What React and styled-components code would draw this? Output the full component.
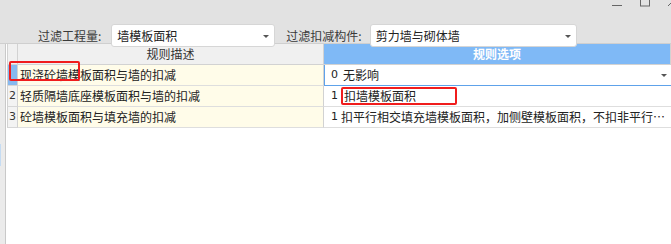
import { Fragment } from "react";
import styled, { createGlobalStyle } from "styled-components";

const Global = createGlobalStyle`
  html, body { margin: 0; padding: 0; background: #fff; }
  body {
    font-family: "Noto Sans CJK SC", "Noto Sans", sans-serif;
    font-size: 12px;
    color: #333;
  }
`;

const Page = styled.div`
  width: 671px;
  height: 244px;
  overflow: hidden;
  position: relative;
  background: #fff;
  display: flex;
  flex-direction: column;
`;

const TitleBar = styled.div`
  height: 14px;
  background: #e2e2e2;
  display: flex;
  justify-content: flex-end;
  align-items: flex-start;
`;

const WinControls = styled.svg`
  display: block;
`;

const FilterBar = styled.div`
  height: 30px;
  background: #e2e2e2;
  display: flex;
  align-items: flex-start;
  padding: 10px 0 0 38px;
  box-sizing: border-box;
  border-bottom: 1px solid #cfcfcf;
  position: relative;
  z-index: 2;
`;

const Label = styled.span`
  line-height: 23px;
  color: #3a3a3a;
  margin-right: ${(p) => p.$gap}px;
  white-space: nowrap;
`;

const Select = styled.div`
  width: ${(p) => p.$w}px;
  height: 23px;
  box-sizing: border-box;
  background: #fff;
  border: 1px solid #d6d6d6;
  border-radius: 3px;
  display: flex;
  align-items: center;
  justify-content: space-between;
  padding: 0 5px;
  margin-right: ${(p) => p.$gap}px;
  color: #222;
`;

const Arrow = styled.span`
  width: 0;
  height: 0;
  border-left: 3px solid transparent;
  border-right: 3px solid transparent;
  border-top: 3px solid #555;
  margin-top: 1px;
`;

const Body = styled.div`
  flex: 1;
  display: flex;
`;

const Gutter = styled.div`
  width: 5px;
  background: #ebebeb;
  border-right: 1px solid #c9c9c9;
  position: relative;
  &::after {
    content: "";
    position: absolute;
    left: 0;
    top: 100px;
    width: 1px;
    height: 22px;
    background: #c5dcf3;
  }
`;

const Grid = styled.div`
  flex: 1;
  display: grid;
  grid-template-columns: 11px 306px 1fr;
  grid-auto-rows: 21px;
  align-content: start;
  background: #fff;
  padding-left: 1px;
`;

const Head = styled.div`
  height: 20px;
  line-height: 20px;
  text-align: center;
  background: ${(p) => (p.$blue ? "#7fb9f6" : "#f0f0f0")};
  color: ${(p) => (p.$blue ? "#fff" : "#333")};
  font-weight: ${(p) => (p.$blue ? 600 : 400)};
  border-right: 1px solid #d2d2d2;
  border-bottom: 1px solid #d2d2d2;
  border-left: ${(p) => (p.$first ? "1px solid #d2d2d2" : "none")};
`;

const Num = styled.div`
  background: ${(p) => (p.$sel ? "#86b9ef" : "#f3f3f3")};
  border-left: 1px solid #d2d2d2;
  border-right: 1px solid #d2d2d2;
  border-bottom: 1px solid #d6d6d6;
  line-height: 20px;
  font-size: 11px;
  font-family: "DejaVu Sans", sans-serif;
  padding-left: 1px;
  color: #333;
`;

const Desc = styled.div`
  background: #fffce9;
  border-right: 1px solid #d2d2d2;
  border-bottom: 1px solid #dedede;
  line-height: 20px;
  padding-left: 2px;
  white-space: nowrap;
  overflow: hidden;
  color: #222;
`;

const Option = styled.div`
  background: #fff;
  border-bottom: 1px solid ${(p) => (p.$edit ? "#5ea2ea" : "#dedede")};
  box-shadow: ${(p) => (p.$edit ? "inset 1px 0 0 #5ea2ea" : "none")};
  display: flex;
  align-items: center;
  line-height: 20px;
  padding: 0 4px 0 7px;
  white-space: nowrap;
  overflow: hidden;
  color: #222;
`;

const Code = styled.span`
  font-family: "DejaVu Sans", sans-serif;
  font-size: 11px;
  width: ${(p) => p.$w}px;
  flex: none;
`;

const OptText = styled.span`
  flex: 1;
  min-width: 0;
  overflow: hidden;
  text-overflow: ellipsis;
`;

const Mark = styled.div`
  position: absolute;
  left: ${(p) => p.$x}px;
  top: ${(p) => p.$y}px;
  width: ${(p) => p.$w}px;
  height: ${(p) => p.$h}px;
  border: 2px solid #f01c1c;
  border-radius: 2px;
  box-sizing: border-box;
  pointer-events: none;
`;

const rows = [
  { n: "", sel: true, desc: "现浇砼墙模板面积与墙的扣减", code: "0", codeW: 12, opt: "无影响", edit: true },
  { n: "2", desc: "轻质隔墙底座模板面积与墙的扣减", code: "1", codeW: 13, opt: "扣墙模板面积" },
  { n: "3", desc: "砼墙模板面积与填充墙的扣减", code: "1", codeW: 10, opt: "扣平行相交填充墙模板面积，加侧壁模板面积，不扣非平行相交填充墙模板面积" },
];

export default function App() {
  return (
    <Page>
      <Global />
      <TitleBar>
        <WinControls width="71" height="14" viewBox="0 0 71 14">
          <line x1="12" y1="5.5" x2="22" y2="5.5" stroke="#666" strokeWidth="1" />
          <rect x="40.5" y="-4" width="9" height="10" fill="none" stroke="#666" strokeWidth="1" />
          <line x1="68" y1="6" x2="72" y2="2" stroke="#666" strokeWidth="1" />
        </WinControls>
      </TitleBar>
      <FilterBar>
        <Label $gap={10}>过滤工程量:</Label>
        <Select $w={164} $gap={11}>
          <span>墙模板面积</span>
          <Arrow />
        </Select>
        <Label $gap={8}>过滤扣减构件:</Label>
        <Select $w={207} $gap={0}>
          <span>剪力墙与砌体墙</span>
          <Arrow />
        </Select>
      </FilterBar>
      <Body>
        <Gutter />
        <Grid>
          <Head $first />
          <Head>规则描述</Head>
          <Head $blue>规则选项</Head>
          {rows.map((r, i) => (
            <Fragment key={i}>
              <Num $sel={r.sel}>{r.n}</Num>
              <Desc>{r.desc}</Desc>
              <Option $edit={r.edit}>
                <Code $w={r.codeW}>{r.code}</Code>
                <OptText>{r.opt}</OptText>
                {r.edit && <Arrow />}
              </Option>
            </Fragment>
          ))}
        </Grid>
      </Body>
      <Mark $x={9} $y={61} $w={71} $h={20} />
      <Mark $x={341} $y={87} $w={116} $h={18} />
    </Page>
  );
}
